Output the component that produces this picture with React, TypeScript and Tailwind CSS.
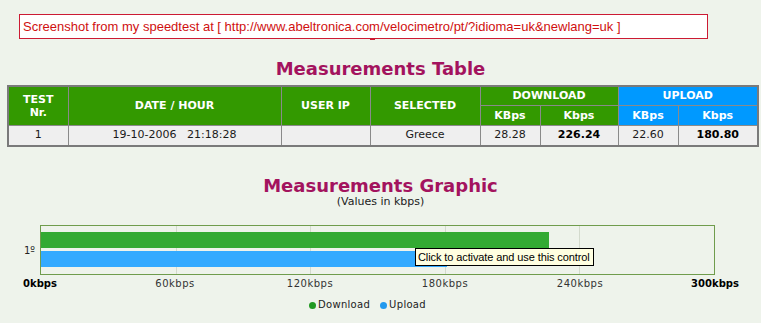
import React from "react";

const rows = [
  { test: "1", date: "19-10-2006\u00a0\u00a0 21:18:28", ip: "", selected: "Greece", dlKB: "28.28", dlKb: "226.24", ulKB: "22.60", ulKb: "180.80" },
];

const bars = [
  { label: "1º", download: 226.24, upload: 180.8 },
];

const MAX = 300;
const ticks = ["0kbps", "60kbps", "120kbps", "180kbps", "240kbps", "300kbps"];

const th = "border border-[#8a8a8a] p-0 text-white font-bold text-[11px] leading-[13px] text-center";
const td = "border border-[#8a8a8a] p-0 text-[11px] text-center text-[#1a1a1a] bg-[#efefef]";

const App = () => {
  return (
    <div className="w-[761px] h-[323px] overflow-hidden bg-[#eef3eb] font-['DejaVu_Sans',sans-serif]">
      {/* note box */}
      <div className="pt-[14px] pl-[19px]">
        <div className="w-[689px] h-[25px] border border-[#cc1a33] bg-white pl-[3px] text-[13px] leading-[23px] text-[#d01010] font-['Liberation_Sans',Arial,sans-serif] whitespace-nowrap">
          Screenshot from my speedtest at [ http://www.abeltronica.com/velocimetro/pt/?idioma=uk&amp;newlang=uk ]
        </div>
        <div className="ml-[351px] w-[5px] h-[1px] bg-[#cc1a33]"></div>
      </div>

      <h1 className="mt-[18px] h-[22px] text-center text-[18px] leading-[22px] font-bold text-[#a3135e]">
        Measurements Table
      </h1>

      <table className="mt-[5px] ml-[7px] w-[750px] table-fixed border-collapse border-2 border-[#7a7a7a]">
        <colgroup>
          <col className="w-[60px]" />
          <col className="w-[213px]" />
          <col className="w-[89px]" />
          <col className="w-[110px]" />
          <col className="w-[60px]" />
          <col className="w-[78px]" />
          <col className="w-[60px]" />
          <col className="w-[80px]" />
        </colgroup>
        <thead>
          <tr className="h-[19px]">
            <th rowSpan={2} className={`${th} bg-[#339900]`}>
              TEST<br />Nr.
            </th>
            <th rowSpan={2} className={`${th} bg-[#339900]`}>DATE / HOUR</th>
            <th rowSpan={2} className={`${th} bg-[#339900]`}>USER IP</th>
            <th rowSpan={2} className={`${th} bg-[#339900]`}>SELECTED</th>
            <th colSpan={2} className={`${th} bg-[#339900]`}>DOWNLOAD</th>
            <th colSpan={2} className={`${th} bg-[#0099ff]`}>UPLOAD</th>
          </tr>
          <tr className="h-[20px]">
            <th className={`${th} bg-[#339900]`}>KBps</th>
            <th className={`${th} bg-[#339900]`}>Kbps</th>
            <th className={`${th} bg-[#0099ff]`}>KBps</th>
            <th className={`${th} bg-[#0099ff]`}>Kbps</th>
          </tr>
        </thead>
        <tbody>
          {rows.map((r) => (
            <tr key={r.test} className="h-[21px]">
              <td className={td}>{r.test}</td>
              <td className={td}>{r.date}</td>
              <td className={td}>{r.ip}</td>
              <td className={td}>{r.selected}</td>
              <td className={td}>{r.dlKB}</td>
              <td className={`${td} font-bold text-black`}>{r.dlKb}</td>
              <td className={td}>{r.ulKB}</td>
              <td className={`${td} font-bold text-black`}>{r.ulKb}</td>
            </tr>
          ))}
        </tbody>
      </table>

      <h2 className="mt-[30px] h-[18px] text-center text-[18px] leading-[18px] font-bold text-[#a3135e]">
        Measurements Graphic
      </h2>
      <div className="mt-[2px] h-[10px] text-center text-[11px] leading-[10px] text-[#222]">(Values in kbps)</div>

      {/* chart */}
      {bars.map((b) => (
        <div key={b.label} className="mt-[18px] flex">
          <div className="w-[40px] pl-[24px] flex items-center text-[10px] text-[#222]">{b.label}</div>
          <div className="relative w-[675px] h-[50px] border border-[#6f9c4c]">
            {[1, 2, 3, 4].map((i) => (
              <div
                key={i}
                className="absolute top-0 bottom-0 w-px bg-[#d3dacd]"
                style={{ left: `${i * 20}%` }}
              ></div>
            ))}
            <div className="relative flex flex-col gap-[3px] pt-[6px]">
              <div className="h-[16px] bg-[#33aa33]" style={{ width: `${(b.download / MAX) * 100}%` }}></div>
              <div className="h-[16px] bg-[#33aaff]" style={{ width: `${(b.upload / MAX) * 100}%` }}></div>
            </div>
            <div className="absolute left-[374px] top-[22px] w-[179px] h-[18px] border border-black bg-[#ffffe1] pl-[2px] text-[11px] leading-[16px] tracking-[-0.1px] text-black font-['Liberation_Sans',Arial,sans-serif] whitespace-nowrap">
              Click to activate and use this control
            </div>
          </div>
        </div>
      ))}

      <div className="relative ml-[40px] mt-[3px] w-[675px] h-[12px]">
        {ticks.map((t, i) => (
          <span
            key={t}
            className={`absolute top-0 -translate-x-1/2 text-[10px] leading-[12px] whitespace-nowrap ${
              i === 0 || i === ticks.length - 1 ? "font-bold text-black" : "text-[#333] tracking-[0.5px]"
            }`}
            style={{ left: `${i * 20}%` }}
          >
            {t}
          </span>
        ))}
      </div>

      <div className="mt-[9px] pl-[309px] flex items-center text-[10px] leading-[12px] text-[#222]">
        <span className="w-[7px] h-[7px] rounded-full bg-[#229922]"></span>
        <span className="ml-[2px] tracking-[0.3px]">Download</span>
        <span className="ml-[10px] w-[7px] h-[7px] rounded-full bg-[#2299ee]"></span>
        <span className="ml-[2px] tracking-[0.3px]">Upload</span>
      </div>
    </div>
  );
};

export default App;
